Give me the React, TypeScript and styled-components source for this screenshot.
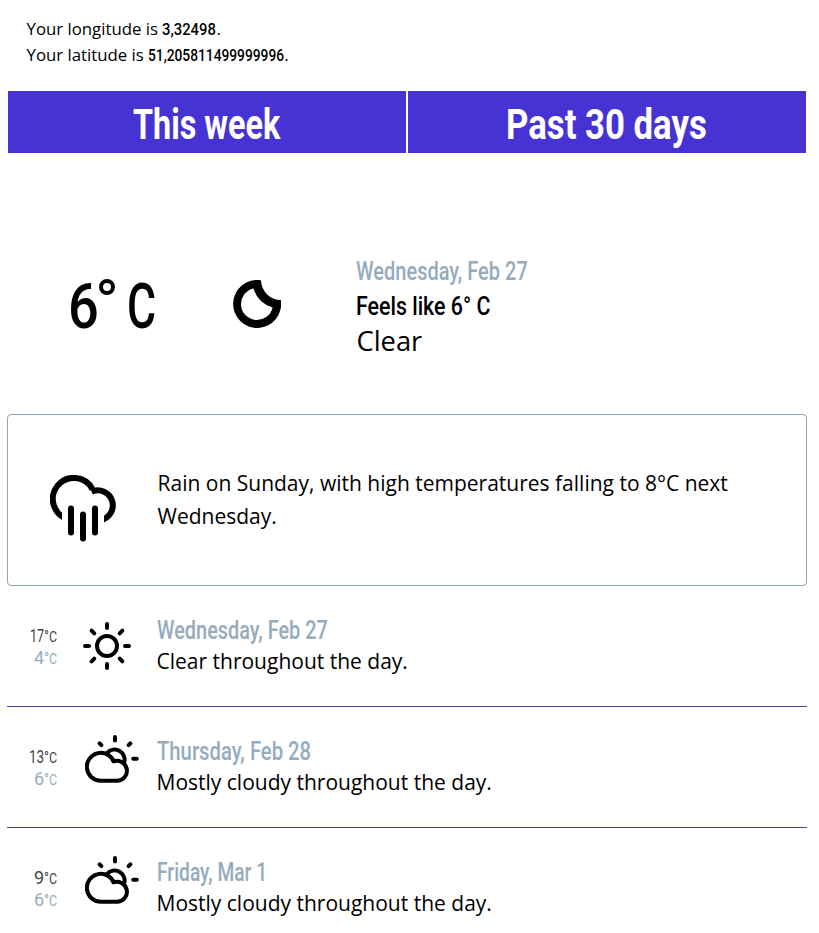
import React, { useLayoutEffect, useRef, useState } from "react";
import styled, { createGlobalStyle } from "styled-components";

const GlobalStyle = createGlobalStyle`
  * { box-sizing: border-box; }
  body {
    margin: 0;
    background: #fff;
    color: #000;
    font-family: "Open Sans", "Noto Sans", sans-serif;
    font-weight: 400;
    overflow: hidden;
  }
`;

const Page = styled.main`
  width: 819px;
  height: 933px;
  overflow: hidden;
  padding: 16px 12px 0 7px;
`;

const FitBox = styled.span<{ $width: number }>`
  display: inline-block;
  width: ${(p) => p.$width}px;
  white-space: nowrap;
  text-align: left;
`;

const FitInner = styled.span<{ $size: number; $weight: number }>`
  display: inline-block;
  font-family: Roboto, "Liberation Sans", sans-serif;
  font-size: ${(p) => p.$size}px;
  font-weight: ${(p) => p.$weight};
  transform-origin: left center;
`;

type TechProps = {
  width: number;
  size: number;
  weight?: number;
  children: React.ReactNode;
};

/** Condensed display lettering, squeezed horizontally to a given width. */
function Tech({ width, size, weight = 500, children }: TechProps) {
  const ref = useRef<HTMLSpanElement>(null);
  const [scale, setScale] = useState(1);
  useLayoutEffect(() => {
    if (ref.current) setScale(width / ref.current.offsetWidth);
  }, [width, size, weight]);
  return (
    <FitBox $width={width}>
      <FitInner ref={ref} $size={size} $weight={weight} style={{ transform: `scaleX(${scale})` }}>
        {children}
      </FitInner>
    </FitBox>
  );
}

const Location = styled.header`
  padding-left: 19.5px;
  height: 75px;
`;

const LocationLine = styled.p`
  margin: 0;
  height: 26px;
  font-size: 16.8px;
  line-height: 26px;
  white-space: pre;
`;

const Tabs = styled.nav`
  display: grid;
  grid-template-columns: 398px 398px;
  gap: 2px;
  padding-left: 1px;
`;

const Tab = styled.button`
  height: 62px;
  padding: 6px 1px 0 0;
  border: 0;
  background: #4733d4;
  color: #fff;
  line-height: 56px;
`;

const Current = styled.section`
  display: grid;
  grid-template-columns: 225px 124px 1fr;
  height: 261px;
  padding-top: 102px;
`;

const BigTemp = styled.div`
  display: flex;
  padding: 12px 0 0 61px;
  height: 90px;
  line-height: 80px;
`;

const BigDegree = styled.span`
  width: 16px;
  height: 16px;
  margin: 12px 12px 0 0;
  border: 4px solid #000;
  border-radius: 50%;
`;

const IconSlot = styled.div<{ $x?: number; $y?: number }>`
  padding: ${(p) => p.$y ?? 0}px 0 0 ${(p) => p.$x ?? 0}px;
  line-height: 0;
`;

const DateLine = styled.div`
  height: 32px;
  line-height: 34px;
  color: #95acbe;
`;

const FeelsLine = styled.div`
  height: 36px;
  line-height: 38px;
`;

const Condition = styled.div`
  height: 36px;
  padding-left: 0.5px;
  font-size: 27.3px;
  line-height: 36px;
`;

const Details = styled.div``;

const Summary = styled.section`
  display: grid;
  grid-template-columns: 149px 1fr;
  width: 800px;
  height: 172px;
  border: 1px solid #91a6b5;
  border-radius: 4px;
`;

const SummaryText = styled.p`
  margin: 0;
  padding: 52px 60px 0 0.5px;
  font-size: 21px;
  line-height: 33px;
`;

const Day = styled.article`
  display: grid;
  grid-template-columns: 50px 99.5px 1fr;
  width: 800px;
  height: 121px;
  padding-top: 28px;
  border-bottom: 1px solid #4a3d94;
`;

const Temps = styled.div`
  display: flex;
  flex-direction: column;
  align-items: flex-end;
  padding-top: 11px;
`;

const Temp = styled.div<{ $low?: boolean }>`
  display: flex;
  align-items: baseline;
  height: 22px;
  line-height: 22px;
  color: ${(p) => (p.$low ? "#95acbe" : "#444")};
`;

const DayText = styled.div`
  height: 31px;
  font-size: 21px;
  line-height: 31px;
`;

const stroke = { fill: "none", stroke: "#000", strokeLinecap: "round" as const };

function MoonIcon() {
  return (
    <svg width="48" height="48" viewBox="233 280 48 48">
      <path
        fillRule="evenodd"
        d="M261 280.3A24 24 0 1 0 280.8 300A20 20 0 0 1 261 280.3ZM253.5 288.4A28 28 0 0 0 272.6 307.4A16 16 0 1 1 253.5 288.4Z"
      />
    </svg>
  );
}

function RainIcon() {
  return (
    <svg width="66" height="68" viewBox="50 475 66 68">
      <clipPath id="cloud-opening">
        <path d="M50 475H116V543H104V500H62V543H50Z" />
      </clipPath>
      <path
        clipPath="url(#cloud-opening)"
        d="M68 519.1A21 21 0 1 1 92.5 489.3M91.6 491.7A15 15 0 1 1 100 520.2"
        {...stroke}
        strokeLinecap="butt"
        strokeWidth="6"
      />
      <path d="M71 508.5V532.5M83 514.5V538.5M95 508.5V532.5" {...stroke} strokeWidth="6" />
    </svg>
  );
}

function SunIcon() {
  return (
    <svg width="48" height="48" viewBox="-24 -24 48 48" {...stroke} strokeWidth="4">
      <circle r="10" />
      <path d="M0-22V-18M0 18V22M-22 0H-18M18 0H22M-15.4-15.4L-12.7-12.7M12.7 12.7L15.4 15.4M15.4-15.4L12.7-12.7M-12.7 12.7L-15.4 15.4" />
    </svg>
  );
}

function CloudSunIcon() {
  return (
    <svg width="54" height="48" viewBox="85 735 54 48" {...stroke} strokeWidth="4">
      <path
        strokeLinecap="butt"
        d="M114.2 762.6A14 14 0 1 0 101 780.8H117A10 10 0 1 0 113 761.6M107 753A10 10 0 0 1 123.9 763.2"
      />
      <path d="M115 737V740.6M99.6 743.4L101.4 745.2M130.4 743.4L128.6 745.2M133.2 758.8H136.8" />
    </svg>
  );
}

type Forecast = {
  date: string;
  width: number;
  high: [string, number];
  low: [string, number];
  text: string;
  icon: "sun" | "cloud";
};

const days: Forecast[] = [
  { date: "Wednesday, Feb 27", width: 171, high: ["17", 14], low: ["4", 10], text: "Clear throughout the day.", icon: "sun" },
  { date: "Thursday, Feb 28", width: 154, high: ["13", 15], low: ["6", 10], text: "Mostly cloudy throughout the day.", icon: "cloud" },
  { date: "Friday, Mar 1", width: 110, high: ["9", 10], low: ["6", 10], text: "Mostly cloudy throughout the day.", icon: "cloud" },
];

function Temperature({ value, low }: { value: [string, number]; low?: boolean }) {
  return (
    <Temp $low={low}>
      <Tech width={value[1]} size={18} weight={400}>{value[0]}</Tech>
      <Tech width={5} size={16} weight={400}>°</Tech>
      <Tech width={8} size={14} weight={400}>C</Tech>
    </Temp>
  );
}

export default function App() {
  return (
    <>
      <GlobalStyle />
      <Page>
        <Location>
          <LocationLine>
            Your longitude is <Tech width={54} size={17}>3,32498</Tech>.
          </LocationLine>
          <LocationLine>
            Your latitude is <Tech width={136} size={17}>51,205811499999996</Tech>.
          </LocationLine>
        </Location>
        <Tabs>
          <Tab><Tech width={147} size={42} weight={700}>This week</Tech></Tab>
          <Tab><Tech width={201} size={42} weight={700}>Past 30 days</Tech></Tab>
        </Tabs>
        <Current>
          <BigTemp>
            <Tech width={31} size={63}>6</Tech>
            <BigDegree aria-label="°" />
            <Tech width={29} size={63}>C</Tech>
          </BigTemp>
          <IconSlot $x={1} $y={25}><MoonIcon /></IconSlot>
          <Details>
            <DateLine><Tech width={172} size={25}>Wednesday, Feb 27</Tech></DateLine>
            <FeelsLine><Tech width={134} size={26}>Feels like 6° C</Tech></FeelsLine>
            <Condition>Clear</Condition>
          </Details>
        </Current>
        <Summary>
          <IconSlot $x={42} $y={60}><RainIcon /></IconSlot>
          <SummaryText>
            Rain on Sunday, with high temperatures falling to 8°C next Wednesday.
          </SummaryText>
        </Summary>
        {days.map((d) => (
          <Day key={d.date}>
            <Temps>
              <Temperature value={d.high} />
              <Temperature value={d.low} low />
            </Temps>
            <IconSlot $x={d.icon === "sun" ? 26 : 28} $y={d.icon === "sun" ? 8 : 0}>
              {d.icon === "sun" ? <SunIcon /> : <CloudSunIcon />}
            </IconSlot>
            <Details>
              <DateLine><Tech width={d.width} size={25}>{d.date}</Tech></DateLine>
              <DayText>{d.text}</DayText>
            </Details>
          </Day>
        ))}
      </Page>
    </>
  );
}
